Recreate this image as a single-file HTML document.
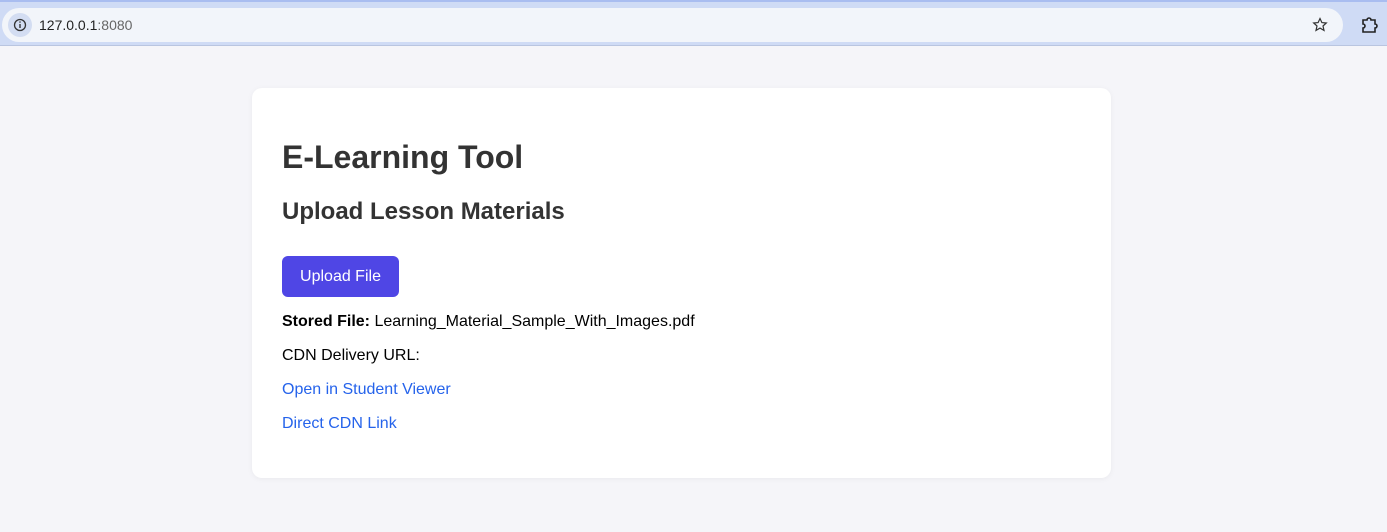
<!DOCTYPE html>
<html><head><style>
body{margin:0;width:1387px;height:532px;background:#f5f5f9;font-family:"Liberation Sans",Arial,sans-serif;overflow:hidden;position:relative}
.bar{position:absolute;left:0;top:0;width:1387px;height:46px;background:#cfdbf5;border-bottom:1px solid #b9c5e0;border-top:2px solid #a9bdf0;box-sizing:border-box}
.omni{position:absolute;left:2px;top:6px;width:1341px;height:34px;border-radius:17px;background:#f2f5fa}
.info{position:absolute;left:6px;top:5px;width:24px;height:24px;border-radius:12px;background:#d3ddf2}
.url{position:absolute;left:37px;top:9px;font-size:14px;color:#222}
.card{position:absolute;left:252px;top:88px;width:859px;height:390px;background:#fff;border-radius:10px;box-shadow:0 1px 6px rgba(0,0,0,.05)}
.t{position:absolute;left:282px;white-space:nowrap}
.btn{position:absolute;left:282px;top:256px;width:117px;height:41px;background:#4f46e5;border-radius:6px;color:#fff;font-size:16px;text-align:center;line-height:41px}
a{color:#2563eb;text-decoration:none}
</style></head><body>
<div class="bar"><div class="omni"><div class="info"><svg width="24" height="24" viewBox="0 0 24 24"><circle cx="12" cy="12" r="5.5" fill="none" stroke="#333" stroke-width="1.3"/><line x1="12" y1="11" x2="12" y2="15" stroke="#333" stroke-width="1.4"/><circle cx="12" cy="9" r=".8" fill="#333"/></svg></div><div class="url">127.0.0.1<span style="color:#666">:8080</span></div>
<svg style="position:absolute;left:1310px;top:9px" width="16" height="16" viewBox="0 0 16 16"><path d="M8 1.5l1.9 4.1 4.4.4-3.3 3 1 4.4L8 11.1 4 13.4l1-4.4-3.3-3 4.4-.4z" fill="none" stroke="#333" stroke-width="1.2"/></svg></div>
<svg style="position:absolute;left:1361px;top:14px" width="18" height="18" viewBox="0 0 18 18"><path d="M2 4h4a2 2 0 0 1 4 0h4v4a2 2 0 0 1 0 4v4H2v-4a2 2 0 0 0 0-4z" fill="none" stroke="#222" stroke-width="1.6"/></svg></div>
<div class="card"></div>
<div class="t" style="top:139px;font-size:32px;font-weight:bold;color:#333">E-Learning Tool</div>
<div class="t" style="top:198px;font-size:24px;font-weight:bold;color:#333">Upload Lesson Materials</div>
<div class="btn">Upload File</div>
<div class="t" style="top:313px;font-size:16px"><b>Stored File:</b> Learning_Material_Sample_With_Images.pdf</div>
<div class="t" style="top:347px;font-size:16px">CDN Delivery URL:</div>
<div class="t" style="top:381px;font-size:16px"><a>Open in Student Viewer</a></div>
<div class="t" style="top:415px;font-size:16px"><a>Direct CDN Link</a></div>
</body></html>
